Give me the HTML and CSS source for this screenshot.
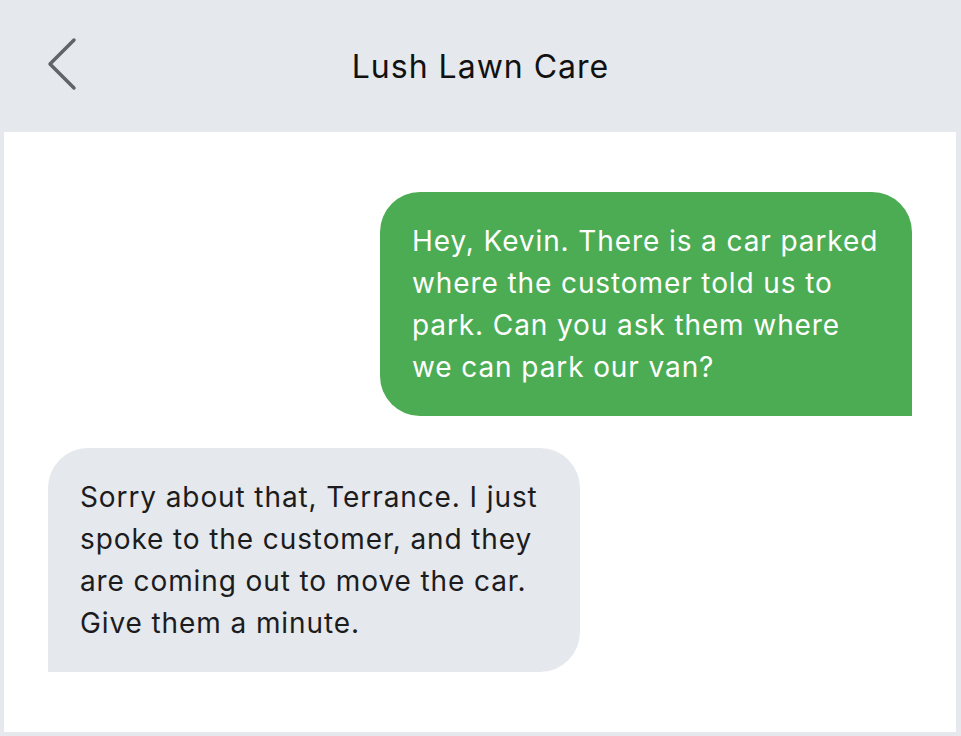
FILE: index.html
```html
<!DOCTYPE html>
<html lang="en">
<head>
    <meta charset="UTF-8">
    <meta name="viewport" content="width=device-width, initial-scale=1.0">
    <title>Lush Lawn Care</title>
    <link rel="stylesheet" href="styles.css">
</head>
<body>
    <div class="app">
        <header class="header">
            <button class="back" aria-label="Back">
                <svg width="30" height="54" viewBox="0 0 30 54">
                    <path d="M27 3 L3 27 L27 51" fill="none" stroke="#5f646b" stroke-width="3.5" stroke-linecap="round" stroke-linejoin="round"/>
                </svg>
            </button>
            <h1 class="title">Lush Lawn Care</h1>
        </header>

        <main class="chat">
            <div class="bubble sent">Hey, Kevin. There is a car parked where the customer told us to park. Can you ask them where we can park our van?</div>
            <div class="bubble received">Sorry about that, Terrance. I just spoke to the customer, and they are coming out to move the car. Give them a minute.</div>
        </main>
    </div>
</body>
</html>
```

FILE: styles.css
```css
/* Base */
body {
    margin: 0;
    font-family: Inter, "Noto Sans", sans-serif;
    background: #e5e8ec;
    color: #1c1c1e;
}

.app {
    height: 100vh;
    display: flex;
    flex-direction: column;
}

/* Header */
.header {
    height: 132px;
    flex-shrink: 0;
    position: relative;
    display: flex;
    align-items: center;
    justify-content: center;
}

.back {
    position: absolute;
    left: 47px;
    top: 37px;
    padding: 0;
    border: none;
    background: none;
    cursor: pointer;
}

.back svg {
    display: block;
}

.title {
    margin: 0;
    font-size: 32px;
    font-weight: 400;
    color: #111;
    letter-spacing: 1px;
}

/* Messages */
.chat {
    flex: 1;
    background: #fff;
    margin: 0 5px 4px 4px;
    padding: 60px 44px;
    display: flex;
    flex-direction: column;
    gap: 32px;
}

.bubble {
    box-sizing: border-box;
    width: 532px;
    padding: 28px 32px;
    font-size: 28px;
    line-height: 42px;
    letter-spacing: 0.9px;
    border-radius: 40px;
}

.sent {
    align-self: flex-end;
    background: #4cac54;
    color: #fff;
    border-bottom-right-radius: 0;
}

.received {
    align-self: flex-start;
    background: #e5e8ec;
    color: #1c1c1e;
    border-bottom-left-radius: 0;
}
```
